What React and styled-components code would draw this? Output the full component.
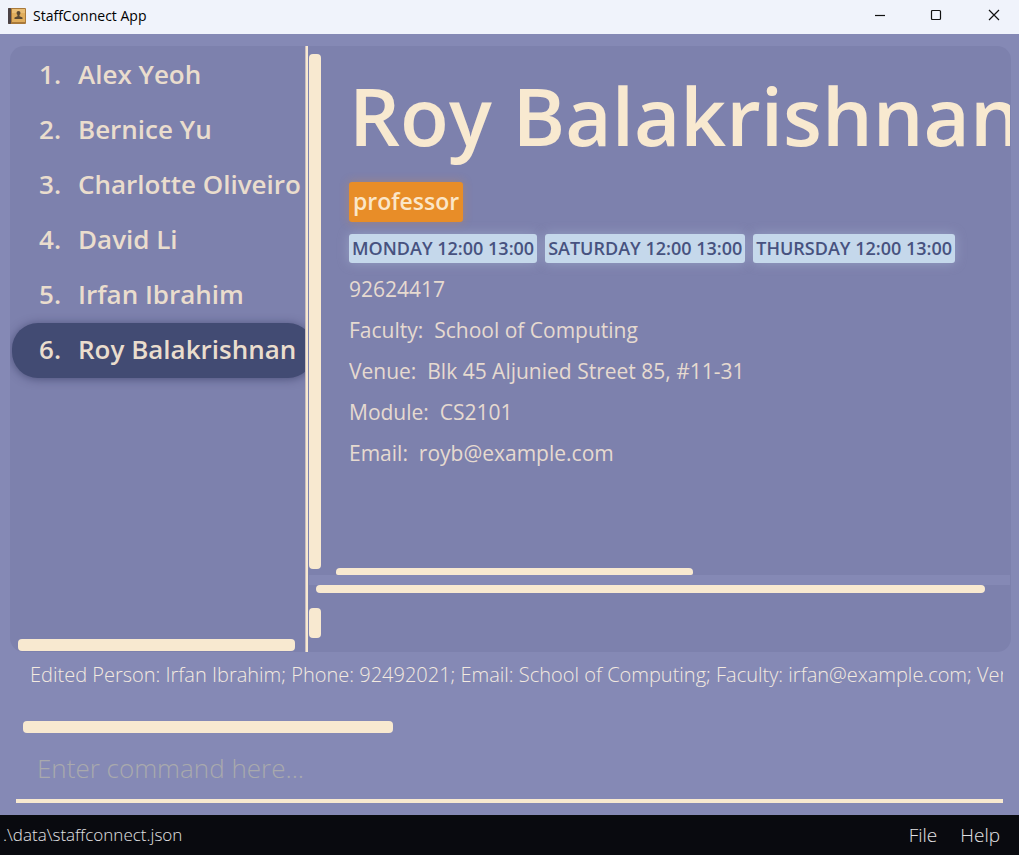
import React from "react";
import styled, { createGlobalStyle } from "styled-components";

const cream = "#f8e9d0";
const panel = "#7d81ad";
const surface = "#8589b5";

const GlobalStyle = createGlobalStyle`
  * { box-sizing: border-box; }
  body { margin: 0; background: ${surface}; }
  body, button, input, textarea { font-family: "Open Sans", "Noto Sans", sans-serif; }
`;

const Window = styled.div`
  display: flex;
  flex-direction: column;
  min-height: 100vh;
  background: ${surface};
`;

const TitleBar = styled.header`
  display: flex;
  align-items: center;
  height: 34px;
  padding-left: 8px;
  background: #f0f3fb;
`;

const AppTitle = styled.h1`
  flex: 1;
  margin: 0 0 2px 7px;
  font-size: 14px;
  line-height: 20px;
  font-weight: 400;
  color: #000;
`;

const WindowButton = styled.button`
  display: flex;
  align-items: center;
  justify-content: center;
  width: ${(p) => (p.$wide ? 60 : 56)}px;
  height: 34px;
  padding: 0 0 4px;
  border: 0;
  background: transparent;
`;

const WindowButtons = styled.div`
  display: flex;
  margin-right: -5px;
`;

const SplitPane = styled.main`
  display: flex;
  flex: 1;
  margin: 12px 8px 0 10px;
  border-radius: 14px;
  background: ${panel};
  overflow: hidden;
`;

const Sidebar = styled.nav`
  display: flex;
  flex-direction: column;
  justify-content: space-between;
  width: 295px;
  flex: none;
  overflow: hidden;
`;

const PersonList = styled.ol`
  width: 302px;
  margin: 2px 0 0 2px;
  padding: 0;
  list-style: none;
`;

const PersonButton = styled.button`
  display: flex;
  align-items: center;
  gap: 17px;
  width: 100%;
  height: 55px;
  padding: 0 0 4px 27px;
  border: 0;
  border-radius: 26px;
  background: ${(p) => (p.$selected ? "#424b73" : "transparent")};
  box-shadow: ${(p) => (p.$selected ? "0 1px 10px rgba(50, 56, 96, 0.65)" : "none")};
  color: #eaddcd;
  font-size: 26px;
  line-height: 36px;
  font-weight: 600;
  text-align: left;
  white-space: nowrap;
`;

const Divider = styled.div`
  flex: none;
  width: 3px;
  border-left: 1px solid #c8bdc0;
  background: ${cream};
`;

const Details = styled.section`
  display: flex;
  flex-direction: column;
  flex: 1;
  min-width: 0;
  gap: 10px;
  padding: 0 1px;
  background: linear-gradient(${surface}, ${surface}) 1px calc(100% - 67px) / calc(100% - 2px) 10px no-repeat;
`;

const ProfilePane = styled.div`
  display: flex;
  flex: 1;
  overflow: hidden;
`;

const Thumb = styled.div`
  flex: none;
  background: ${cream};
  border-radius: 4px;
`;

const SidebarThumb = styled(Thumb)`
  height: 12px;
  margin: 0 10px 1px 8px;
`;

const ProfileThumb = styled(Thumb)`
  width: 12px;
  margin: 8px 0 6px;
`;

const ContentThumb = styled(Thumb)`
  width: 54%;
  height: 7px;
  margin-left: -13px;
  border-radius: 4px 4px 2px 2px;
`;

const ResultThumb = styled(Thumb)`
  width: 370px;
  height: 12px;
  margin: 0 0 0 7px;
`;

const Profile = styled.article`
  display: flex;
  flex-direction: column;
  flex: 1;
  min-width: 0;
  padding: 9px 0 0 28px;
  color: #e6dad0;
`;

const ProfileName = styled.h2`
  margin: 0 0 7px;
  color: ${cream};
  font-size: 80px;
  line-height: 120px;
  font-weight: 600;
  white-space: nowrap;
`;

const RoleTag = styled.span`
  align-self: flex-start;
  padding: 0 4px 1px;
  border-radius: 3px;
  background: #e88d28;
  box-shadow: 0 0 10px rgba(232, 141, 40, 0.35);
  color: #fbe6c8;
  font-size: 23px;
  line-height: 39px;
  font-weight: 600;
`;

const SlotList = styled.ul`
  display: flex;
  gap: 8px;
  margin: 12px 0 6px;
  padding: 0;
  list-style: none;
`;

const Slot = styled.li`
  padding: 0 3px;
  border-radius: 3px;
  background: #c5d8eb;
  box-shadow: 0 0 12px rgba(197, 216, 235, 0.35);
  color: #47527f;
  font-size: 18px;
  line-height: 29px;
  font-weight: 600;
  white-space: nowrap;
`;

const Fact = styled.p`
  margin: 0;
  font-size: 21px;
  line-height: 41px;
  font-weight: 400;
  white-space: pre;
`;

const Spacer = styled.div`
  flex: 1;
`;

const LowerPane = styled.div`
  height: 67px;
  flex: none;
`;

const LowerThumb = styled(Thumb)`
  height: 8px;
  margin: 0 25px 15px 7px;
`;

const LowerSideThumb = styled(Thumb)`
  width: 12px;
  height: 30px;
`;

const CommandArea = styled.section`
  flex: none;
  padding: 0 16px 12px;
`;

const Result = styled.textarea`
  display: block;
  width: 100%;
  height: 69px;
  padding: 8px 0 0 14px;
  border: 0;
  outline: 0;
  resize: none;
  overflow: hidden;
  background: transparent;
  color: #f3eae0;
  font-size: 20px;
  line-height: 30px;
  font-weight: 300;
  white-space: pre;
`;

const CommandInput = styled.input`
  display: block;
  width: 100%;
  height: 70px;
  padding: 4px 0 0 21px;
  border: 0;
  border-bottom: 4px solid ${cream};
  outline: 0;
  background: transparent;
  color: ${cream};
  font-size: 26px;
  font-weight: 300;
  &::placeholder { color: #a9a9ad; opacity: 1; }
`;

const StatusBar = styled.footer`
  display: flex;
  align-items: center;
  gap: 23px;
  height: 40px;
  padding: 0 19px 1px 3px;
  background: #090a0f;
  color: #e2e2e4;
  font-size: 17px;
  font-weight: 300;
`;

const FilePath = styled.span`
  flex: 1;
`;

const MenuButton = styled.button`
  padding: 0;
  border: 0;
  background: transparent;
  color: inherit;
  font-size: 19px;
  font-weight: 300;
`;

const people = ["Alex Yeoh", "Bernice Yu", "Charlotte Oliveiro", "David Li", "Irfan Ibrahim", "Roy Balakrishnan"];
const slots = ["MONDAY 12:00 13:00", "SATURDAY 12:00 13:00", "THURSDAY 12:00 13:00"];
const facts = [
  "92624417",
  "Faculty:  School of Computing",
  "Venue:  Blk 45 Aljunied Street 85, #11-31",
  "Module:  CS2101",
  "Email:  royb@example.com",
];
const resultText =
  "Edited Person: Irfan Ibrahim; Phone: 92492021; Email: School of Computing; Faculty: irfan@example.com; Venue: Blk 47";

function BookIcon() {
  return (
    <svg width="18" height="18" viewBox="0 0 18 18" aria-hidden="true">
      <rect x="0" y="0" width="18" height="16" rx="1" fill="#a9793a" />
      <rect x="4" y="1" width="13" height="13" fill="#e0ad5c" />
      <rect x="4" y="1" width="13" height="4" fill="#e9bd74" />
      <rect x="0" y="0" width="3" height="16" rx="1" fill="#4b4246" />
      <circle cx="10.5" cy="5" r="2" fill="#594832" />
      <path d="M9.500 6h2v2.200l3 1.200V11h-8v-1.600l3-1.200z" fill="#594832" />
    </svg>
  );
}

function ControlIcon({ d }) {
  return (
    <svg width="12" height="12" viewBox="0 0 12 12" fill="none" stroke="#111" strokeWidth="1.2" aria-hidden="true">
      <path d={d} />
    </svg>
  );
}

export default function App() {
  return (
    <Window>
      <GlobalStyle />
      <TitleBar>
        <BookIcon />
        <AppTitle>StaffConnect App</AppTitle>
        <WindowButtons>
          <WindowButton aria-label="Minimize"><ControlIcon d="M1 6.500H11" /></WindowButton>
          <WindowButton aria-label="Maximize"><ControlIcon d="M2.500 1.500H9.500Q10.500 1.500 10.500 2.500V9.500Q10.500 10.500 9.500 10.500H2.500Q1.500 10.500 1.500 9.500V2.500Q1.500 1.500 2.500 1.500Z" /></WindowButton>
          <WindowButton $wide aria-label="Close"><ControlIcon d="M1 1L11 11M11 1L1 11" /></WindowButton>
        </WindowButtons>
      </TitleBar>
      <SplitPane>
        <Sidebar aria-label="Staff">
          <PersonList>
            {people.map((name, i) => (
              <li key={name}>
                <PersonButton $selected={i === 5} aria-current={i === 5 ? "true" : undefined}>
                  <span>{i + 1}.</span>
                  <span>{name}</span>
                </PersonButton>
              </li>
            ))}
          </PersonList>
          <SidebarThumb />
        </Sidebar>
        <Divider />
        <Details>
          <ProfilePane>
            <ProfileThumb />
            <Profile>
              <ProfileName>Roy Balakrishnan</ProfileName>
              <RoleTag>professor</RoleTag>
              <SlotList>
                {slots.map((slot) => <Slot key={slot}>{slot}</Slot>)}
              </SlotList>
              {facts.map((fact) => <Fact key={fact}>{fact}</Fact>)}
              <Spacer />
              <ContentThumb />
            </Profile>
          </ProfilePane>
          <LowerPane>
            <LowerThumb />
            <LowerSideThumb />
          </LowerPane>
        </Details>
      </SplitPane>
      <CommandArea>
        <Result readOnly aria-label="Result" wrap="off" value={resultText} />
        <ResultThumb />
        <CommandInput aria-label="Command" placeholder="Enter command here..." />
      </CommandArea>
      <StatusBar>
        <FilePath>.\data\staffconnect.json</FilePath>
        <MenuButton>File</MenuButton>
        <MenuButton>Help</MenuButton>
      </StatusBar>
    </Window>
  );
}
